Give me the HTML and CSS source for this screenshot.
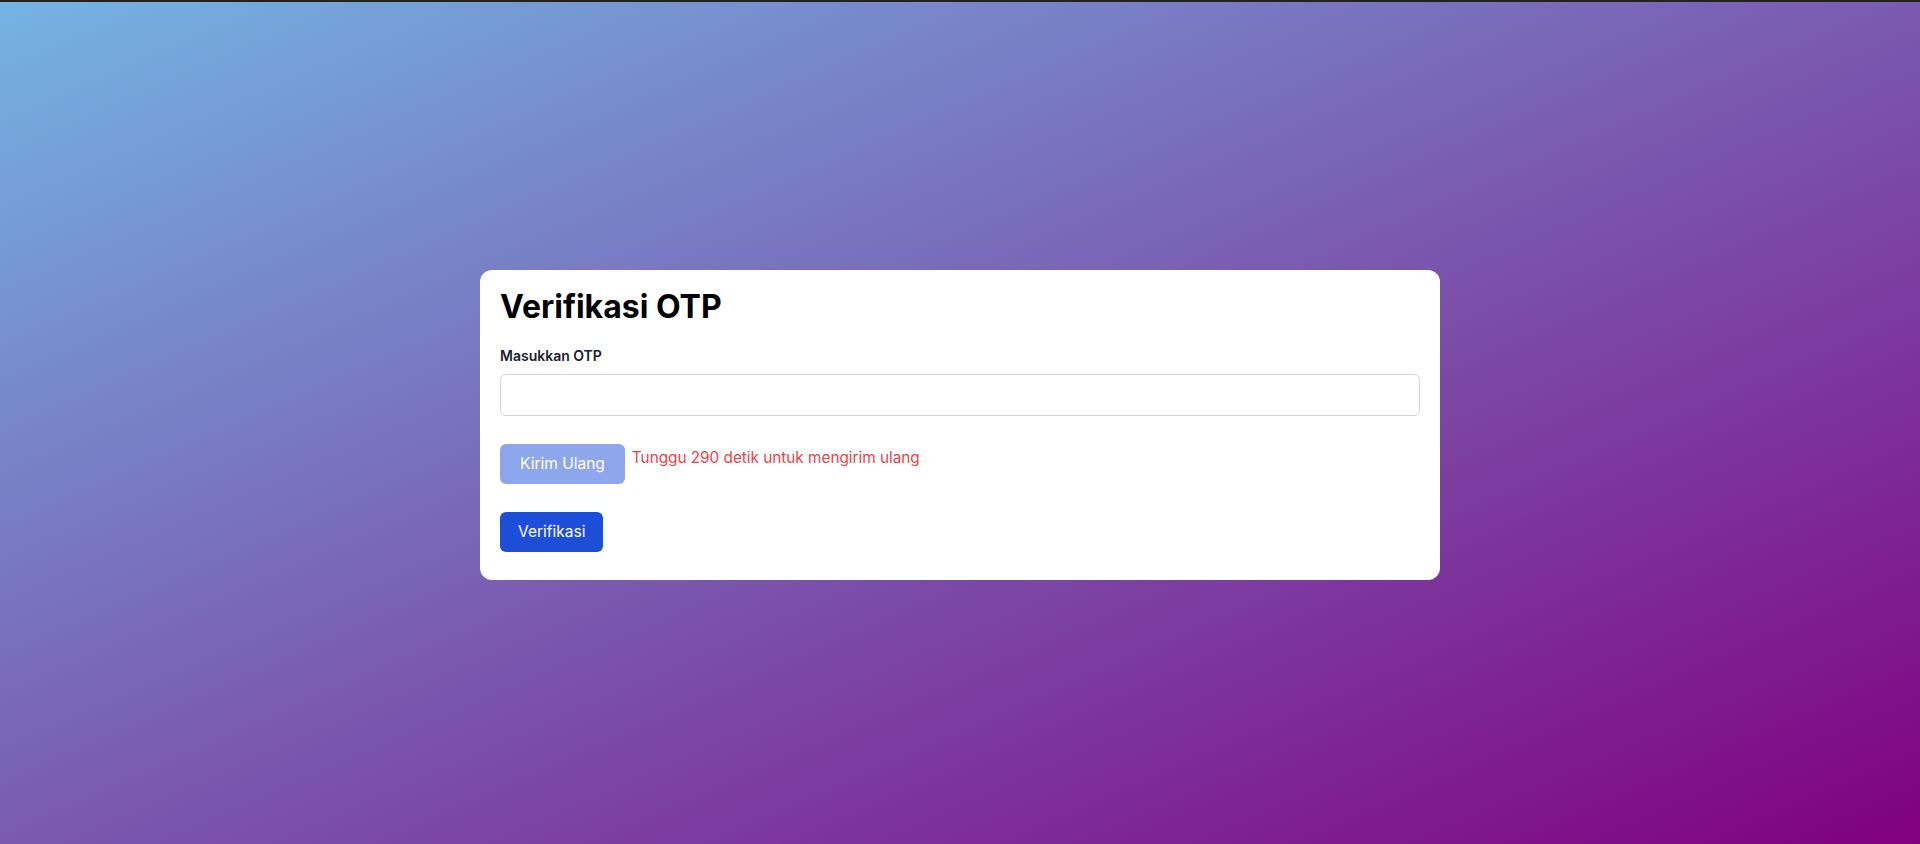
FILE: index.html
```html
<!DOCTYPE html>
<html lang="id">
<head>
<meta charset="utf-8">
<title>Verifikasi OTP</title>
<link rel="stylesheet" href="styles.css">
</head>
<body>
<main class="page">
  <div class="card">
    <h1 class="title">Verifikasi OTP</h1>
    <form class="form">
      <label class="label" for="otp">Masukkan OTP</label>
      <input class="input" id="otp" type="text">
      <div class="resend-row">
        <button type="button" class="btn btn-resend" disabled>Kirim Ulang</button>
        <span class="countdown">Tunggu 290 detik untuk mengirim ulang</span>
      </div>
      <button type="submit" class="btn btn-primary">Verifikasi</button>
    </form>
  </div>
</main>
</body>
</html>
```
FILE: styles.css
```css
*{box-sizing:border-box;}
html,body{margin:0;padding:0;}
body{
  font-family:Inter,"Liberation Sans",sans-serif;
  border-top:2px solid #222;
  min-height:100vh;
  background:linear-gradient(to bottom right,#74b4e2,#800080);
}
.page{
  min-height:842px;
  padding-top:3px;
  display:flex;
  align-items:center;
  justify-content:center;
}
.card{
  width:960px;
  background:#fff;
  border-radius:12px;
  padding:20px 20px 28px;
}
.title{
  margin:0 0 22px;
  font-size:32px;
  line-height:34px;
  font-weight:700;
  color:#000;
}
.form{display:flex;flex-direction:column;align-items:flex-start;}
.label{
  font-size:14px;
  line-height:20px;
  font-weight:600;
  color:#1a202c;
  margin-bottom:8px;
}
.input{
  width:100%;
  height:42px;
  border:1px solid #d1d5db;
  border-radius:6px;
  font-family:inherit;
  font-size:15px;
  padding:0 12px;
  outline:none;
  background:#fff;
}
.resend-row{
  display:flex;
  align-items:flex-start;
  margin-top:28px;
}
.btn{
  height:40px;
  border:none;
  border-radius:6px;
  padding:0 20px;
  font-family:inherit;
  font-size:15.5px;
  color:#fff;
  cursor:pointer;
}
.btn-resend{background:#8ea6eb;cursor:not-allowed;}
.countdown{
  margin-left:7px;
  padding-top:5px;
  font-size:15.3px;
  line-height:18px;
  color:#ef3e46;
}
.btn-primary{background:#1d4ed8;margin-top:28px;padding:0 18px;}
```
